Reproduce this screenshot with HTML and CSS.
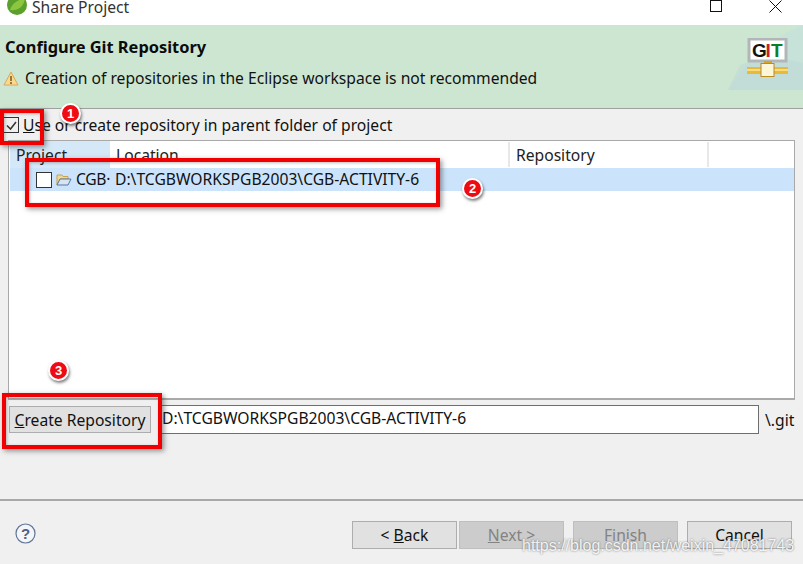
FILE: index.html
```html
<!DOCTYPE html>
<html lang="en">
<head>
<meta charset="utf-8">
<title>Share Project</title>
<link rel="stylesheet" href="styles.css">
</head>
<body>
<div class="dialog">
  <div class="titlebar">
    <svg class="app-icon" width="20" height="20" viewBox="0 0 20 20"><circle cx="10" cy="10" r="10" fill="#5aa02c"/><path d="M3 15C5 8 11 5 18 3 17 11 12 16 3 15Z" fill="#8cc63f"/></svg>
    <span class="title-text">Share Project</span>
    <span class="win-icons">
      <svg width="12" height="12" viewBox="0 0 12 12"><rect x=".5" y=".5" width="11" height="11" fill="none" stroke="#111"/></svg>
      <svg width="13" height="13" viewBox="0 0 13 13"><path d="M.5.5l12 12M12.500.5l-12 12" stroke="#111" fill="none"/></svg>
    </span>
  </div>

  <header class="banner">
    <svg class="swoosh" width="75" height="65" viewBox="0 0 75 65"><path d="M0 65C18 35 45 12 75 0V65Z" fill="#c4dfdc" opacity=".7"/><path d="M12 40C35 32 55 32 75 38V65H0Z" fill="#bcd6d6" opacity=".45"/></svg>
    <svg class="git-icon" width="42" height="40" viewBox="0 0 42 40">
      <rect x="2" y="1" width="37" height="22" fill="#fff" stroke="#b3b6b8" stroke-width="3"/>
      <text x="5" y="19" class="git-g">G</text>
      <text x="18.500" y="19" class="git-i">I</text>
      <text x="24" y="19" class="git-t">T</text>
      <rect x="17" y="23" width="8" height="5" fill="#d9a520"/>
      <rect x="0" y="29" width="41" height="7" fill="#e9b93a"/>
      <rect x="0" y="31" width="41" height="2" fill="#f7dc80"/>
      <rect x="14" y="25.500" width="13" height="13" fill="#fdf6d8" stroke="#c08a1c"/>
    </svg>
    <h1 class="banner-title">Configure Git Repository</h1>
    <div class="banner-msg">
      <svg width="16" height="15" viewBox="0 0 16 15"><path d="M8 1L15 14H1Z" fill="#fbd98c" stroke="#d8a860" stroke-linejoin="round"/><path d="M8 5v5M8 11v2" stroke="#7a5a20" stroke-width="1.500"/></svg>
      <span>Creation of repositories in the Eclipse workspace is not recommended</span>
    </div>
  </header>

  <main class="content">
    <label class="use-parent">
      <span class="checkbox checked"><svg width="13" height="13" viewBox="0 0 13 13"><path d="M2 6.500l3.500 3.500L11 3" fill="none" stroke="#333" stroke-width="1.500"/></svg></span>
      <span><u>U</u>se or create repository in parent folder of project</span>
    </label>

    <div class="table">
      <div class="table-head">
        <div class="col col-project sorted">Project</div>
        <div class="col col-location">Location</div>
        <div class="col col-repo">Repository</div>
        <div class="col col-fill"></div>
      </div>
      <div class="table-row">
        <div class="cell-project">
          <span class="checkbox"></span>
          <svg width="16" height="13" viewBox="0 0 16 13"><path d="M1 2h5l1 1.500h5V6H4L1 12Z" fill="#f3d98f" stroke="#c9a24a"/><path d="M1 12L4 6h11l-3 6Z" fill="#d8e4f4" stroke="#5577aa"/></svg>
          <span class="cell-name">CGB·</span>
        </div>
        <div class="cell-location">D:\TCGBWORKSPGB2003\CGB-ACTIVITY-6</div>
      </div>
    </div>

    <div class="create-row">
      <button class="btn create-btn" type="button"><u>C</u>reate Repository</button>
      <div class="path-input">D:\TCGBWORKSPGB2003\CGB-ACTIVITY-6</div>
      <span class="suffix">\.git</span>
    </div>
  </main>

  <footer class="footer">
    <svg class="help" width="21" height="21" viewBox="0 0 21 21"><circle cx="10.500" cy="10.500" r="9.500" fill="#f4f5f8" stroke="#5f7699" stroke-width="1.200"/><text x="10.500" y="16" text-anchor="middle" class="help-text">?</text></svg>
    <div class="nav-buttons">
      <div class="btn-pair">
        <button class="btn nav" type="button">&lt; <u>B</u>ack</button>
        <button class="btn nav disabled" type="button"><u>N</u>ext &gt;</button>
      </div>
      <button class="btn nav disabled" type="button">Finish</button>
      <button class="btn nav" type="button">Cancel</button>
    </div>
  </footer>

  <div class="mark mark-1"></div>
  <div class="mark mark-2"></div>
  <div class="mark mark-3"></div>
  <span class="badge badge-1">1</span>
  <span class="badge badge-2">2</span>
  <span class="badge badge-3">3</span>
  <span class="watermark">https://blog.csdn.net/weixin_47081743</span>
</div>
</body>
</html>
```
FILE: styles.css
```css
* { box-sizing: border-box; }
html, body { margin: 0; padding: 0; }
body { font-family: "Noto Sans", "Open Sans", sans-serif; font-size: 15.65px; color: #111; background: #f0f0f0; }
.dialog { position: relative; width: 803px; height: 564px; overflow: hidden; display: flex; flex-direction: column; background: #f0f0f0; }

.titlebar { height: 25px; background: #fff; display: flex; align-items: flex-start; padding-left: 7px; flex: none; position: relative; }
.app-icon { margin-top: -5px; flex: none; }
.title-text { margin-left: 5px; margin-top: -3px; line-height: 20px; color: #333; }
.win-icons { margin-left: auto; display: flex; align-items: flex-start; gap: 47px; padding-right: 21px; }

.banner { position: relative; height: 84px; flex: none; background: #cde6d1; border-bottom: 1px solid #a0a0a0; padding: 12px 5px 0; }
.swoosh { position: absolute; right: 0; top: 0; }
.git-icon { position: absolute; left: 747px; top: 13px; }
.git-g, .git-i, .git-t { font-family: "Liberation Sans", sans-serif; font-weight: 700; font-size: 19px; }
.git-g { fill: #111; }
.git-i { fill: #c8202a; }
.git-t { fill: #0d7d2c; }
.banner-title { margin: 0; font-size: 16.4px; line-height: 20px; font-weight: 700; color: #0b0b0b; }
.banner-msg { display: flex; align-items: center; gap: 6px; margin-top: 11px; line-height: 20px; }
.banner-msg svg { flex: none; margin-left: -2px; }

.content { flex: none; height: 390px; padding: 6px 8px 0 8px; display: flex; flex-direction: column; }
.use-parent { display: flex; align-items: center; gap: 4px; height: 20px; margin-left: -5px; line-height: 18px; }
.checkbox { width: 16px; height: 16px; border: 1px solid #333; background: #fff; display: inline-flex; align-items: center; justify-content: center; flex: none; }
.checked { background: #f0f0f0; }

.table { margin-top: 5px; height: 260px; background: #fff; border: 1px solid #a9a9a9; border-bottom-width: 2px; padding-left: 1px; flex: none; }
.table-head { display: flex; height: 27px; }
.col { height: 25px; line-height: 26px; padding-left: 6px; border-right: 2px solid #e8e8e8; color: #222; margin-top: 1px; flex: none; }
.col-project { width: 100px; height: 27px; margin-top: 0; line-height: 29px; background: #d5e8f8; border-right: 0; overflow: hidden; }
.col-location { width: 400px; }
.col-repo { width: 199px; }
.col-fill { flex: 1; border-right: 0; }
.table-row { display: flex; align-items: center; height: 23px; background: #cce4fb; }
.cell-project { width: 100px; display: flex; align-items: center; padding-left: 26px; flex: none; gap: 4px; }
.cell-project svg { flex: none; }
.cell-name { line-height: 19px; white-space: nowrap; letter-spacing: -0.3px; }
.cell-location { padding-left: 5px; line-height: 19px; white-space: nowrap; }

.create-row { margin-top: 5px; display: flex; align-items: center; height: 29px; }
.btn { font: inherit; color: #111; height: 28px; background: #e1e1e1; border: 1px solid #adadad; padding: 0; line-height: 22px; flex: none; }
.create-btn { width: 142px; margin-left: 1px; height: 27px; }
.path-input { margin-left: 10px; width: 598px; height: 29px; background: #fff; border: 1px solid #6e6e6e; line-height: 25px; white-space: nowrap; }
.suffix { margin-left: 6px; line-height: 28px; }

.footer { flex: 1; border-top: 2px solid #a8a8a8; display: flex; align-items: flex-start; padding: 20px 11px 0 15px; }
.help { margin-top: 2px; flex: none; }
.help-text { font-family: "Liberation Sans", sans-serif; font-weight: 700; font-size: 15px; fill: #4b6188; }
.nav-buttons { margin-left: auto; display: flex; gap: 9px; }
.btn-pair { display: flex; gap: 2px; }
.nav { width: 105px; height: 28px; }
.disabled { background: #cccccc; color: #838383; border-color: #bfbfbf; }

.mark { position: absolute; border: 4px solid #f00000; box-shadow: 2px 2px 5px rgba(60, 60, 60, .55), inset 1px 1px 3px rgba(60, 60, 60, .35); pointer-events: none; }
.mark-1 { left: 0; top: 109px; width: 44px; height: 36px; }
.mark-2 { left: 25px; top: 158px; width: 415px; height: 49px; }
.mark-3 { left: 2px; top: 393px; width: 160px; height: 56px; }

.badge { position: absolute; width: 17px; height: 17px; border-radius: 50%; background: #ee0b14; border: 2px solid #fff; box-shadow: 1px 2px 3px rgba(0, 0, 0, .5); box-sizing: content-box; color: #fff; font: 700 13px/17px "Liberation Sans", sans-serif; text-align: center; }
.badge-1 { left: 60px; top: 103px; }
.badge-2 { left: 462px; top: 178px; }
.badge-3 { left: 48px; top: 360px; }

.watermark { position: absolute; left: 522px; top: 537px; font: 16px/18px "Liberation Sans", sans-serif; color: rgba(255, 255, 255, .9); text-shadow: 0 0 2px rgba(90, 90, 90, .9); white-space: nowrap; }
```
